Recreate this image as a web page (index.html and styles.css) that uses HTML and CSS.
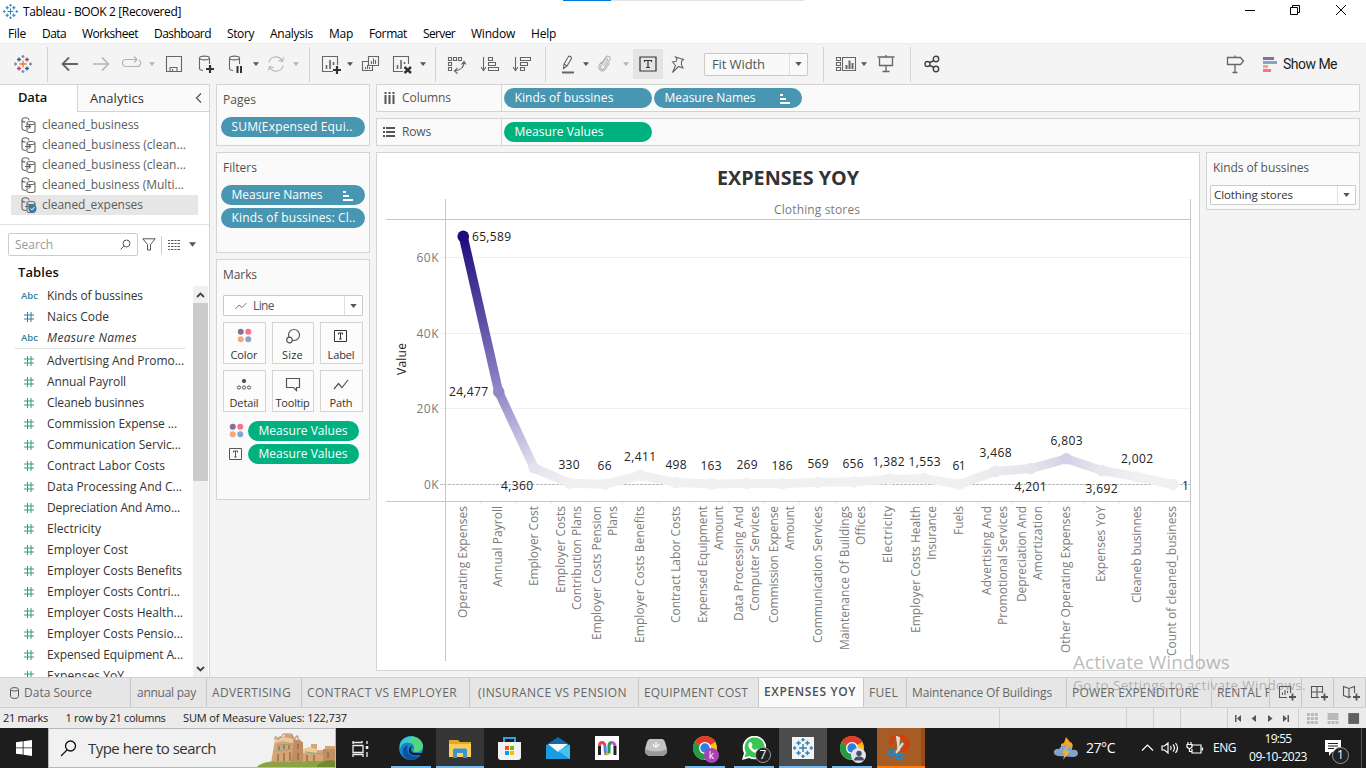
FILE: index.html
```html
<!DOCTYPE html>
<html lang="en">
<head>
<meta charset="utf-8">
<title>Tableau - BOOK 2 [Recovered]</title>
<link rel="stylesheet" href="styles.css">
</head>
<body>
<svg class="defs" width="0" height="0">
  <symbol id="tableau" viewBox="0 0 18 18">
    <path d="M9 5.500v7M5.500 9h7" class="t1"/><path d="M5 2.500v4M3 4.500h4M13 11.500v4M11 13.500h4" class="t2"/><path d="M13 2.500v4M11 4.500h4M5 11.500v4M3 13.500h4" class="t3"/><path d="M9 0v3M7.500 1.500h3M9 15v3M7.500 16.500h3M1.500 7.500v3M0 9h3M16.500 7.500v3M15 9h3" class="t4"/>
  </symbol>
  <symbol id="caret" viewBox="0 0 8 5"><path d="M0 0h8L4 5z" fill="currentColor"/></symbol>
  <symbol id="dots" viewBox="0 0 16 16"><circle cx="4" cy="4" r="3.200" fill="#85709b"/><circle cx="12" cy="4" r="3.200" fill="#fb7185"/><circle cx="4" cy="12" r="3.200" fill="#f4a77c"/><circle cx="12" cy="12" r="3.200" fill="#84a5cd"/></symbol>
  <symbol id="tbox" viewBox="0 0 14 12"><path d="M.5.5h12v11H.5zM4.500 4.500V3h4v1.500M6.500 3v6M5.200 9h2.600" fill="none" stroke="currentColor"/></symbol>
  <symbol id="sort" viewBox="0 0 11 10"><path d="M0 1h3M0 5h6M0 9h10" stroke="#fff" stroke-width="2"/></symbol>
  <symbol id="cyl" viewBox="0 0 16 17"><g fill="none" stroke="#666" stroke-width="1.100"><path d="M8 3.500C8 0 1 0 1 3v8c0 1.500 2 2.500 4 2.500M1 3c0 1.500 2 2 3.500 2"/><path d="M6 6v8c0 2 8 2 8 0V6c0-2-8-2-8 0c0 2 8 2 8 0M4 9.500h5.500M7.500 7.500l2 2-2 2"/></g></symbol>
  <symbol id="chrome" viewBox="0 0 24 24"><circle cx="12" cy="12" r="12" fill="#fbc116"/><path d="M12 12L1.600 6A12 12 0 0 1 22.400 6z" fill="#e33b2e"/><path d="M12 12L1.600 6A12 12 0 0 0 11 24l6-9z" fill="#269947"/><circle cx="12" cy="12" r="6" fill="#fff"/><circle cx="12" cy="12" r="4.700" fill="#2f7de1"/></symbol>
</svg>

<header class="titlebar">
  <svg class="appicon blue" width="15" height="15"><use href="#tableau"/></svg>
  <span class="title" data-w="158">Tableau - BOOK 2 [Recovered]</span>
  <div class="loader"><i></i></div>
  <svg class="winctl" width="110" height="14" viewBox="0 0 110 14" fill="none" stroke="#000"><path d="M2 7.500h10"/><path d="M47.500 4.500h7v7h-7zM49.500 4V2.500h7v7H55"/><path d="M93 2l10 10M103 2L93 12"/></svg>
</header>
<nav class="menubar">
  <span data-w="18">File</span><span data-w="24">Data</span><span data-w="56">Worksheet</span><span data-w="57">Dashboard</span><span data-w="27">Story</span><span data-w="43">Analysis</span><span data-w="24">Map</span><span data-w="38">Format</span><span data-w="32">Server</span><span data-w="44">Window</span><span data-w="25">Help</span>
</nav>
<div class="toolbar">
  <svg class="color" width="18" height="18"><use href="#tableau"/></svg>
  <b class="sep"></b>
  <svg class="back" width="20" height="20" viewBox="0 0 20 20"><path d="M18 10H3M9 3.500L2.500 10 9 16.500" stroke-width="1.800"/></svg>
  <svg class="dim" width="20" height="20" viewBox="0 0 20 20"><path d="M2 10h15M11 3.500l6.500 6.500-6.500 6.500" stroke-width="1.600"/></svg>
  <svg class="dim" width="20" height="20" viewBox="0 0 20 20"><path d="M9 5.500H4a3.500 3.500 0 0 0 0 7h11a3.500 3.500 0 0 0 2-6.500M7 5.500h8M12 2.500l3 3-3 3"/></svg>
  <svg class="caret dim" width="6" height="4"><use href="#caret"/></svg>
  <svg width="20" height="20" viewBox="0 0 20 20"><path d="M2.500 2.500h15v15h-15zM6 17v-3.500h7V17M8.500 17v-2"/></svg>
  <svg width="20" height="20" viewBox="0 0 20 20"><path d="M7 16.500c-2 0-3.500-1-3.500-2V4c0-2.500 10-2.500 10 0v6M3.500 4c0 2.500 10 2.500 10 0"/><path d="M14 11v8M10 15h8" stroke="#333" stroke-width="2.200"/></svg>
  <svg width="20" height="20" viewBox="0 0 20 20"><path d="M7 16.500c-2 0-3.500-1-3.500-2V4c0-2.500 10-2.500 10 0v6M3.500 4c0 2.500 10 2.500 10 0"/><path d="M11.500 12v7M15 12v7" stroke="#333" stroke-width="2"/></svg>
  <svg class="caret" width="6" height="4"><use href="#caret"/></svg>
  <svg class="dim" width="20" height="20" viewBox="0 0 20 20"><path d="M3 8.500a7 7 0 0 1 13-2M17 11.500a7 7 0 0 1-13 2M17.500 3.500l-1 4-4-1M2.500 16.500l1-4 4 1"/></svg>
  <svg class="caret dim" width="6" height="4"><use href="#caret"/></svg>
  <b class="sep"></b>
  <svg width="20" height="20" viewBox="0 0 20 20"><path d="M12 17.500H1.500v-15h15V11"/><path d="M5.500 15v-4M9 15V6M12.500 11V8" stroke-width="1.600"/><path d="M16 12v8M12 16h8" stroke="#333" stroke-width="2.200"/></svg>
  <svg class="caret" width="6" height="4"><use href="#caret"/></svg>
  <svg width="20" height="20" viewBox="0 0 20 20"><path d="M7.500 2.500h10v9h-10zM7 7.500H1.500v9h10V12M10.500 10V7M12.500 10V4.500M14.500 10V6M4.500 15v-2M6.500 15v-4M8.500 15v-2"/></svg>
  <svg width="20" height="20" viewBox="0 0 20 20"><path d="M11 17.500H1.500v-15h15V10"/><path d="M5.500 15v-4M9 15V6M12.500 10V8" stroke-width="1.600"/><path d="M12.500 13l6.500 6M19 13l-6.500 6" stroke="#333" stroke-width="2.400"/></svg>
  <svg class="caret" width="6" height="4"><use href="#caret"/></svg>
  <b class="sep"></b>
  <svg width="20" height="20" viewBox="0 0 20 20"><path d="M1.500 3.500h3v3h-3zM6.500 3.500h3v3h-3zM11.500 3.500h3v3h-3zM1.500 8.500h3v3h-3zM1.500 13.500h3v3h-3zM17 8c0 5-3 8-9 9M14.500 10.500L17 7.500l2 3M10.500 14l-3 3 3 2.500"/></svg>
  <svg width="20" height="20" viewBox="0 0 20 20"><path d="M3.500 3v13M1 13l2.500 3.500L6 13M8.500 3.500h4v3h-4zM8.500 8.500h7v3h-7zM8.500 13.500h10v3h-10z"/></svg>
  <svg width="20" height="20" viewBox="0 0 20 20"><path d="M3.500 3v13M1 13l2.500 3.500L6 13M8.500 3.500h10v3h-10zM8.500 8.500h7v3h-7zM8.500 13.500h4v3h-4z"/></svg>
  <b class="sep"></b>
  <svg width="20" height="20" viewBox="0 0 20 20"><path d="M6 10L10.500 2.500c1-1 3.500.5 3 2L9 12l-3.500 2.500zM6 10l3 2"/><path d="M4 18.500h12" stroke-width="2"/></svg>
  <svg class="caret" width="6" height="4"><use href="#caret"/></svg>
  <svg class="dim" width="20" height="20" viewBox="0 0 20 20"><path d="M6 10l5-7c2-2 5 0 4 2.500l-6 9c-1.500 2-4.500 0-3.500-2l5-7.500c1-1 2.500 0 2 1l-4 6M6 8L4.500 11c-2 4 2 8 5.500 4.500L14.500 9"/></svg>
  <svg class="caret dim" width="6" height="4"><use href="#caret"/></svg>
  <span class="toggled"><svg width="18" height="16" viewBox="0 0 18 16"><path d="M1 1h16v14H1zM5.500 6V4.500h7V6M9 4.500v7M7 11.500h4" stroke="#333" stroke-width="1.200"/></svg></span>
  <svg width="20" height="20" viewBox="0 0 20 20"><path d="M7.500 3l8 2.500-2 1.500 0 4 1.500 3-4.500-1.500-6 6 3-7-3-3.500 3.500-.5L9 5z"/></svg>
  <span class="select fit"><span data-w="53">Fit Width</span><i><svg class="caret" width="7" height="4"><use href="#caret"/></svg></i></span>
  <b class="sep"></b>
  <svg width="35" height="20" viewBox="0 0 35 20"><path d="M12.500 3.500h4v3h-4zM12.500 8.500h4v3h-4zM12.500 13.500h4v3h-4zM18.500 3.500h13v13h-13z"/><path d="M22.500 15v-4M25.500 15V6.500M28.500 15V9" stroke-width="2"/></svg>
  <svg class="caret" width="6" height="4"><use href="#caret"/></svg>
  <svg width="20" height="20" viewBox="0 0 20 20"><path d="M1.500 3h17M10 1v2M3.500 4v7.500h13V4M10 12v5.500M6.500 17.500h7" stroke-width="1.300"/></svg>
  <b class="sep"></b>
  <svg width="20" height="20" viewBox="0 0 20 20" class="dark"><circle cx="5.500" cy="10" r="2.500"/><circle cx="14" cy="5" r="2.700"/><circle cx="14" cy="15" r="2.700"/><path d="M8 8.500l4-2M8 11.500l4 2"/></svg>
  <span></span>
  <svg width="20" height="20" viewBox="0 0 20 20"><path d="M2.500 3.500h13l3 3.500-3 3.500h-13zM10 1.500v2M10 10.500v8M7.500 18.500h5" stroke-width="1.300"/></svg>
  <span class="showme"><svg width="14" height="15" viewBox="0 0 14 15"><path d="M0 1.500h11" stroke="#85709b"/><path d="M0 5.500h14" stroke="#84a5cd"/><path d="M0 9.500h5" stroke="#f4a77c"/><path d="M0 13.500h8" stroke="#fb7185"/></svg><span data-w="54">Show Me</span></span>
</div>

<main class="work">
  <aside class="side">
    <div class="sidetabs"><b data-w="29">Data</b><div><span data-w="54">Analytics</span><svg width="7" height="10" viewBox="0 0 7 10"><path d="M6 .5L1.500 5 6 9.500" fill="none" stroke="#555" stroke-width="1.300"/></svg></div></div>
    <div class="sources" id="sources"></div>
    <div class="searchrow">
      <div class="search"><span data-w="38">Search</span><svg width="11" height="11" viewBox="0 0 11 11" fill="none" stroke="#555"><circle cx="6.500" cy="4.500" r="3.500"/><path d="M4 7L.5 10.500"/></svg></div>
      <svg width="14" height="13" viewBox="0 0 14 13" fill="none" stroke="#555"><path d="M.8.800h12.400L8.500 6.500V12h-3V6.500z"/></svg>
      <b></b>
      <svg width="13" height="10" viewBox="0 0 13 10"><path d="M0 .5h13M0 3.500h13M0 6.500h13M0 9.500h13" stroke="#555" stroke-dasharray="2 1 2.500 1"/></svg>
      <svg width="7" height="5"><use href="#caret"/></svg>
    </div>
    <h3 class="tables"><span data-w="41">Tables</span></h3>
    <div class="fieldpane">
      <div class="fields" id="fields"></div>
      <div class="scroll"><svg width="9" height="6" viewBox="0 0 9 6"><path d="M1 5l3.500-3.500L8 5" fill="none" stroke="#444" stroke-width="1.800"/></svg><i></i><svg width="9" height="6" viewBox="0 0 9 6"><path d="M1 1l3.500 3.500L8 1" fill="none" stroke="#444" stroke-width="1.800"/></svg></div>
    </div>
  </aside>

  <section class="cards">
    <div class="card pages"><h4><span data-w="33">Pages</span></h4><div class="pill blue"><span data-w="121">SUM(Expensed Equi..</span></div></div>
    <div class="card filters"><h4><span data-w="34">Filters</span></h4><div class="pill blue"><span data-w="91">Measure Names</span><svg width="11" height="10"><use href="#sort"/></svg></div><div class="pill blue"><span data-w="124">Kinds of bussines: Cl..</span></div></div>
    <div class="card marks"><h4><span data-w="34">Marks</span></h4>
      <div class="select mark"><svg width="12" height="8" viewBox="0 0 12 8"><path d="M.5 7L4 3l3 2.500L11.500 1" fill="none" stroke="#777"/></svg><span data-w="21">Line</span><i><svg class="caret" width="7" height="4"><use href="#caret"/></svg></i></div>
      <div class="buttons">
        <div><svg width="15" height="16" viewBox="0 0 15 16"><use href="#dots" width="15" height="15"/></svg><span data-w="27">Color</span></div>
        <div><svg width="16" height="16" viewBox="0 0 16 16" fill="none" stroke="#555" stroke-width="1.200"><circle cx="9" cy="7" r="5.500"/><circle cx="4.500" cy="12" r="2.800" fill="#fafafa"/></svg><span data-w="21">Size</span></div>
        <div><svg width="14" height="16" viewBox="0 -2 14 16"><use href="#tbox" width="14" height="12"/></svg><span data-w="27">Label</span></div>
        <div><svg width="16" height="16" viewBox="0 0 16 16" fill="none" stroke="#555"><circle cx="8" cy="5" r="1.700" fill="#555"/><circle cx="3" cy="11.500" r="1.600"/><circle cx="8" cy="11.500" r="1.600"/><circle cx="13" cy="11.500" r="1.600"/></svg><span data-w="29">Detail</span></div>
        <div><svg width="16" height="16" viewBox="0 0 16 16" fill="none" stroke="#555" stroke-width="1.200"><path d="M1.500 2.500h13v9h-3v3l-3-3h-7z"/></svg><span data-w="34">Tooltip</span></div>
        <div><svg width="16" height="16" viewBox="0 0 16 16" fill="none" stroke="#555" stroke-width="1.200"><path d="M1 13l4.500-5.500 3.500 4L15 4"/></svg><span data-w="23">Path</span></div>
      </div>
      <div class="enc"><svg width="16" height="16" viewBox="0 0 16 16"><use href="#dots" width="15" height="15"/></svg><div class="pill green"><span data-w="89">Measure Values</span></div></div>
      <div class="enc"><svg width="14" height="12" viewBox="1 0 14 12"><use href="#tbox" width="14" height="12"/></svg><div class="pill green"><span data-w="89">Measure Values</span></div></div>
    </div>
  </section>

  <section class="stage">
    <div class="shelf"><div><svg width="13" height="12" viewBox="0 0 13 12"><path d="M2.500 0v12M6.500 0v12M10.500 0v12" stroke="#555" stroke-width="2" stroke-dasharray="2 1 9"/></svg><span data-w="49">Columns</span></div><div class="pill blue"><span data-w="99">Kinds of bussines</span></div><div class="pill blue"><span data-w="91">Measure Names</span><svg width="11" height="10"><use href="#sort"/></svg></div></div>
    <div class="shelf"><div><svg width="13" height="12" viewBox="0 0 13 12"><path d="M0 2h12M0 6h12M0 10h12" stroke="#555" stroke-width="2" stroke-dasharray="2 1 9"/></svg><span data-w="29">Rows</span></div><div class="pill green"><span data-w="89">Measure Values</span></div></div>
    <div class="viewrow">
      <div class="view"><svg id="chart" width="822" height="517" viewBox="377 153 822 517"></svg></div>
      <div class="qf"><span data-w="96">Kinds of bussines</span><div class="select"><span data-w="79">Clothing stores</span><i><svg class="caret" width="7" height="4"><use href="#caret"/></svg></i></div></div>
    </div>
  </section>
</main>

<div class="sheets">
  <div class="s0"><svg width="9" height="12" viewBox="0 0 9 12" fill="none" stroke="#555"><path d="M.5 2.500v7c0 2.500 8 2.500 8 0v-7c0-2.500-8-2.500-8 0c0 2 8 2 8 0"/></svg><span data-w="68">Data Source</span></div>
  <div><span data-w="59">annual pay</span></div><div><span data-w="79">ADVERTISING</span></div><div><span data-w="150">CONTRACT VS EMPLOYER</span></div><div class="s4"><span data-w="149">(INSURANCE VS PENSION</span></div><div><span data-w="104">EQUIPMENT COST</span></div><div class="active"><span data-w="92">EXPENSES YOY</span></div><div><span data-w="29">FUEL</span></div><div><span data-w="140">Maintenance Of Buildings</span></div><div><span data-w="127">POWER EXPENDITURE</span></div><div><span data-w="54">RENTAL F</span></div>
  <div class="new"><svg width="18" height="16" viewBox="0 0 18 16"><path d="M9 12.500H1.500v-11h11V8M4.500 10V7.500M7 10V5M9.500 8V6"/><path d="M11 12h7M14.500 8.500v7" stroke-width="1.800"/></svg></div>
  <div class="new"><svg width="18" height="16" viewBox="0 0 18 16"><path d="M9 12.500H1.500v-11h11V8M7 1.500v11M1.500 7h11"/><path d="M11 12h7M14.500 8.500v7" stroke-width="1.800"/></svg></div>
  <div class="new"><svg width="18" height="16" viewBox="0 0 18 16"><path d="M7 12.500l-5.500-2v-9L7 3.500l5.500-2V8M7 3.500v9l2-1"/><path d="M11 12h7M14.500 8.500v7" stroke-width="1.800"/></svg></div>
</div>
<div class="status">
  <span data-w="45">21 marks</span><span data-w="100">1 row by 21 columns</span><span data-w="164">SUM of Measure Values: 122,737</span>
  <div class="cells"><i class="w1"></i><i></i><i></i><i class="w2"></i>
    <svg width="70" height="20" viewBox="1 0 70 20" fill="#555"><path d="M8 7h1.500v7H8zM14 7v7l-4-3.500zM29 7v7l-4.500-3.500zM41 7v7l4.500-3.500zM56 7v7l4-3.500zM60.500 7H62v7h-1.500z"/></svg>
    <svg width="68" height="20" viewBox="0 0 68 20" fill="#b9b9b9"><path d="M8 5h3v3H8zM12 5h3v3h-3zM16 5h3v3h-3zM8 9h3v3H8zM12 9h3v3h-3zM16 9h3v3h-3zM8 13h3v3H8zM12 13h3v3h-3zM16 13h3v3h-3zM29 5h11v7H29zM29 13h3v3h-3zM33 13h3v3h-3zM37 13h3v3h-3z"/><path d="M50 5h11v11H50z" fill="#606060"/></svg>
  </div>
</div>

<footer class="taskbar">
  <div class="start"><svg width="16" height="16" viewBox="0 0 16 16" fill="#fff"><path d="M0 2.300l6.700-1v6.200H0zM7.500 1.200L16 0v7.500H7.500zM0 8.300h6.700v6.300L0 13.700zM7.500 8.300H16V16l-8.500-1.200z"/></svg></div>
  <div class="tsearch"><svg width="17" height="17" viewBox="0 0 17 17" fill="none" stroke="#111" stroke-width="1.300"><circle cx="10.500" cy="6" r="5"/><path d="M7 10l-6 6"/></svg><span data-w="128">Type here to search</span>
    <svg class="castle" width="78" height="38" viewBox="0 0 78 38"><path d="M14 34l4-23 8-3 3-3 7 1 1 4 8 3 1 7h8v-5h6v6h8v-4h10v21z" fill="#d5a576"/><path d="M46 13v22H34l3-25zM66 20h12v15H66z" fill="#c08e60"/><path d="M18 11l8-3 10 2v4l-10-2-8 2zM46 20l6-2 8 2v4H46z" fill="#edc99c"/><path d="M20 16l16-1M19 22l17-2M48 23l18 2" stroke="#8fa88c"/><path d="M22 17v4M27 16v4M32 16v4M21 25v7M27 24v8M33 23v9M41 15v5M41 24v7M50 26v7M57 26v7M71 23v6" stroke="#996a42" stroke-width="1.400"/><path d="M18 11V8h2v2h2V8h2v1l2-4h9l1 4h3v-2h2v4h2v2" fill="none" stroke="#b5885c"/><path d="M0 38c8-9 28-4 42-5s25-2 36 1v4z" fill="#8aa445"/><path d="M60 37c4-5 12-7 18-5v6H60z" fill="#6f8a2c"/></svg>
  </div>
  <div class="apps">
    <div><svg width="17" height="17" viewBox="0 0 17 17" fill="none" stroke="#eee" stroke-width="1.300"><path d="M1 4V1M1 2.500h9V1M1 5.500h10v7H1zM1 17v-2.500h10V17M15 1v3M15 12v5"/><path d="M15 6v3" stroke-width="2.600"/></svg></div>
    <div class="run"><svg width="24" height="24" viewBox="0 0 24 24"><circle cx="12" cy="12" r="12" fill="#1685c9"/><path d="M1 8C4-1 18-3 23 7c3 7-4 11-9 8 2-2 2-7-4-8S2 9 1 14z" fill="#39c7d3"/><path d="M13 1c8 0 13 7 10 12-2 4-7 3-9 2 3-4 1-10-5-10z" fill="#54d67a"/><path d="M9 9c-3 8 3 13 12 11-6 7-15 4-17-2-1-5 1-8 5-9z" fill="#0d4fa2"/><path d="M14 10c-3 1-3 6 1 7h8l1 3-4-1c-6 1-11-1-10-5 0-3 2-4 4-4z" fill="#1d1d1d"/></svg></div>
    <div class="run on wide"><svg width="22" height="19" viewBox="0 0 22 19"><path d="M0 1h9l2 2h11v15H0z" fill="#e9a820"/><path d="M0 5h22v13H0z" fill="#fbcf58"/><path d="M4 19v-8q0-1.500 1.500-1.500h11Q18 9.500 18 11v8h-4v-5H8v5z" fill="#3d92d6"/></svg></div>
    <div><svg width="23" height="23" viewBox="0 0 23 23"><path d="M6 6V1h11v5" fill="none" stroke="#2aa7e1" stroke-width="2"/><path d="M0 5h23v15q0 3-3 3H3q-3 0-3-3z" fill="#f2f2f2"/><path d="M7 9h4v4H7z" fill="#f25022"/><path d="M12 9h4v4h-4z" fill="#7fba00"/><path d="M7 14h4v4H7z" fill="#00a4ef"/><path d="M12 14h4v4h-4z" fill="#ffb900"/></svg></div>
    <div><svg width="24" height="22" viewBox="0 0 24 22"><path d="M0 8l12-8 12 8z" fill="#1466ae"/><path d="M0 8h24v14H0z" fill="#1b9be2"/><path d="M2 7h20L12 15z" fill="#f4f6f8"/><path d="M24 8v14L12 14z" fill="#42c5ed"/></svg></div>
    <div><svg width="24" height="24" viewBox="0 0 24 24"><path d="M0 0h24v24H0z" fill="#fff"/><g fill="none" stroke-width="3"><path d="M4.500 19v-9" stroke="#222"/><path d="M4.500 10q0-3.500 2.500-3.500T10 10" stroke="#ee4256"/><path d="M10 10q0 5 1 9" stroke="#4b87e8"/><path d="M11 18q2 0 3.500-2" stroke="#f2b320"/><path d="M14 17v-7q0-3 2.500-3.500" stroke="#1e9a56"/><path d="M16 6.500q4 0 4 4" stroke="#d84bde"/><path d="M20 10v9" stroke="#222"/></g></svg></div>
    <div><svg width="24" height="20" viewBox="0 0 24 20"><path d="M6 1h12q2 0 3 3l2 7q1 5-4 7H5q-5-2-4-7l2-7q1-3 3-3z" fill="#c4c4c4"/><path d="M1 11q11 5 22 0 1 5-4 7H5q-5-2-4-7z" fill="#999"/><path d="M12 4v6M9.500 6v2l2.500 1M14.500 6v1.500L12 8.500" stroke="#fff" fill="none"/></svg></div>
    <div class="run"><svg width="24" height="24"><use href="#chrome"/></svg><em class="k">k</em></div>
    <div class="run"><svg width="24" height="24" viewBox="0 0 24 24"><path d="M0 24l2-7A11.800 11.800 0 1 1 7 22z" fill="#fff"/><path d="M2.500 21.500l1.500-5A10 10 0 1 1 7.500 20z" fill="#39c655"/><path d="M8 6c-5 4 3 12 8 11 3-1 2-3 1-3.500l-2-1-1.500 1.500c-2-.5-3.500-2-4-3.500L10.500 9 9.500 6.500z" fill="#fff"/></svg><em class="seven">7</em></div>
    <div class="run wide sel"><span class="tile"><svg class="blue" width="20" height="20"><use href="#tableau"/></svg></span></div>
    <div class="run"><svg width="24" height="24"><use href="#chrome"/></svg><em class="user"><svg width="16" height="16" viewBox="0 0 16 16"><circle cx="8" cy="5.500" r="2.700" fill="#40506a"/><path d="M3 12.500q0-4 5-4t5 4z" fill="#40506a"/></svg></em></div>
    <div class="run wide snip"><svg width="24" height="26" viewBox="0 0 24 26"><path d="M5 9C2 3 10-1 17 3c6 4 4 12-3 12" fill="none" stroke="#d83b0c" stroke-width="4"/><path d="M10 1l2 15M12 2l-1 14M16 8l-7 10" stroke="#d7dbe0" stroke-width="2.200"/><g fill="none" stroke="#1b86d0" stroke-width="2.400"><circle cx="4.500" cy="18" r="2.600"/><circle cx="12.500" cy="21.500" r="2.600"/></g></svg></div>
  </div>
  <div class="tray">
    <svg width="26" height="26" viewBox="0 0 26 26"><path d="M9 14Q6 8 11 8l2-6 4 5q4 1 2 7z" fill="#f8a52e"/><path d="M5 21q-5-1-4-5 2-3 5-2 4-6 10-3 3 1 3 4 6-1 6 4-1 3-5 3z" fill="#7fa4ce"/><path d="M14 11l-5 7h3l-2 7 7-9h-4l3-5z" fill="#fdb02b"/></svg>
    <span class="temp" data-w="29">27°C</span>
    <svg class="tico" width="66" height="16" viewBox="0 0 66 16" fill="none" stroke="#fff" stroke-width="1.200"><path d="M2 10.500L7.500 5 13 10.500"/><path d="M22 6h2.500L28 3v10l-3.500-3H22zM30.500 6q1.500 2 0 4M33 4.500q3 3.500 0 7M35.500 3q4 5 0 10"/><path d="M51 5h10v8H52V9M48 2v3M51 2v3M47 4.500h5v2.500q-2.500 3-5 0zM49.500 9v2.500H52M62.500 7.500v3"/></svg>
    <span class="eng" data-w="23">ENG</span>
    <div class="clock"><span data-w="27">19:55</span><span data-w="58">09-10-2023</span></div>
    <div class="notif"><svg width="16" height="16" viewBox="0 0 16 16"><path d="M0 0h16v12H7l-3 4v-4H0z" fill="#fff"/><path d="M3 3.500h10M3 6h10M3 8.500h6" stroke="#222"/></svg><em>1</em></div>
  </div>
</footer>
<div class="activate"><span data-w="157">Activate Windows</span><span data-w="233">Go to Settings to activate Windows.</span></div>
<script src="app.js"></script>
</body>
</html>
```

FILE: styles.css
```css
* { box-sizing: border-box; }
body { margin: 0; width: 1366px; height: 768px; overflow: hidden; display: flex; flex-direction: column; background: #f4f4f4; font: 12px/16px "Open Sans", "Noto Sans", sans-serif; color: #333; position: relative; }
svg { display: block; flex: none; }
.defs { position: absolute; }
[data-w] { display: inline-block; white-space: nowrap; flex: none; }
i, em { font-style: normal; }

.t1 { stroke: var(--logo, #eb7635); } .t2 { stroke: var(--logo, #2a5c93); } .t3 { stroke: var(--logo, #c63a48); } .t4 { stroke: var(--logo, #6f8fb8); }
.t1, .t2, .t3, .t4 { fill: none; stroke-width: 1.300; }
svg.blue { --logo: #2f83b5; }

.titlebar { height: 22px; flex: none; background: #fff; display: flex; align-items: center; padding: 1px 13px 0 3px; position: relative; color: #000; }
.titlebar .title { margin-left: 5px; }
.loader { position: absolute; left: 563px; top: 0; width: 241px; height: 1px; background: #e3e3e3; }
.loader i { display: block; width: 48px; height: 1px; background: #0078d7; }
.winctl { margin-left: auto; margin-top: -3px; }
.menubar { height: 21px; flex: none; background: #fff; display: flex; gap: 16px; padding: 4px 8px 0; color: #000; }

.toolbar { height: 41px; flex: none; display: grid; align-items: center; justify-items: center; border-top: 1px solid #ededed;
  grid-template-columns: 46px 2px 38px 30px 32px 8px 36px 28px 32px 8px 32px 8px 18px 26px 12px 30px 32px 9px 16px 28px 38px 26px 20px 26px 9px 30px 11px 34px 25px 132px 2px 35px 9px 35px 14px 30px 274px 28px 117px; }
.toolbar > svg { fill: none; stroke: #666; stroke-width: 1.100; }
.toolbar > svg.back { margin-left: 6px; }
.toolbar > svg.dim { stroke: #b4b4b4; color: #b4b4b4; }
.toolbar > svg.dark { stroke: #444; stroke-width: 1.400; }
.toolbar > svg.caret, svg.caret { stroke: none; color: #555; }
.toolbar > svg.caret.dim { color: #b4b4b4; }
.sep { width: 1px; height: 35px; background: #d2d2d2; }
.toggled { width: 30px; height: 30px; background: #e4e4e4; display: grid; place-items: center; }
.toggled svg { fill: none; }
.select { border: 1px solid #cacaca; border-radius: 1px; background: #fff; display: flex; align-items: center; }
.select i { margin-left: auto; width: 18px; align-self: stretch; border-left: 1px solid #e0e0e0; display: grid; place-items: center; }
.fit { width: 104px; height: 23px; padding-left: 7px; background: #f9f9f9; font-size: 13px; color: #555; }
.showme { justify-self: start; padding-left: 14px; display: flex; align-items: center; gap: 6px; font-size: 14px; font-family: Roboto, "Open Sans", sans-serif; color: #222; }
.showme svg { stroke-width: 3; }

.work { height: 593px; flex: none; display: flex; }
.side { width: 210px; flex: none; background: #fff; border: 1px solid #d4d4d4; border-left: 0; border-bottom: 0; display: flex; flex-direction: column; overflow: hidden; margin-right: 6px; }
.sidetabs { display: flex; height: 27px; flex: none; font-size: 13px; line-height: 25px; color: #333; }
.sidetabs b { margin-left: 18px; margin-right: 30px; font-weight: 600; color: #111; }
.sidetabs div { flex: 1; border-left: 1px solid #d4d4d4; border-bottom: 1px solid #d4d4d4; background: #fafafa; display: flex; align-items: center; justify-content: space-between; padding: 0 7px 0 12px; }
.sidetabs div span { line-height: 24px; }
.sources { padding: 3px 11px 9px; border-bottom: 1px solid #e0e0e0; }
.sources div { height: 20px; display: flex; align-items: center; gap: 5px; padding-left: 10px; color: #5c5c5c; position: relative; }
.sources .sel { background: #e6e6e6; }
.sources .check { position: absolute; left: 17px; top: 9px; }
.searchrow { display: flex; align-items: center; padding: 8px 0 0 8px; color: #555; height: 31px; flex: none; }
.search { width: 130px; height: 23px; border: 1px solid #ccc; border-radius: 2px; display: flex; align-items: center; justify-content: space-between; padding: 0 6px; color: #999; margin-right: 4px; }
.searchrow b { width: 1px; height: 18px; background: #ccc; margin: 0 6px 0 5px; }
.searchrow svg:last-child { margin-left: 8px; }
.tables { margin: 8px 0 5px 18px; font-size: 13px; line-height: 17px; font-weight: 600; color: #111; }
.fieldpane { flex: 1; display: flex; overflow: hidden; }
.fields { flex: 1; height: 392px; overflow: hidden; margin-top: -1px; }
.fields div { height: 21px; display: flex; align-items: center; }
.fields svg { margin: 0 13px 0 24px; width: 10px; }
.fields b { font-size: 9.500px; font-weight: 600; color: #2f7fa0; width: 26px; margin-left: 21px; }
.fields .it span { font-style: italic; }
.fields hr { margin: 0 8px 1px 15px; border: 0; height: 1px; background: #ddd; }
.scroll { width: 15px; margin-right: 1px; background: #f0f0f0; display: flex; flex-direction: column; align-items: center; padding: 6px 0 5px; }
.scroll i { width: 15px; height: 178px; background: #cbcbcb; margin: 5px 0 auto; }

.cards { width: 154px; flex: none; margin-right: 6px; display: flex; flex-direction: column; gap: 6px; }
.card { border: 1px solid #d4d4d4; background: #fafafa; padding: 7px 4px 0; }
.card h4 { margin: 0 0 9px 2px; font-weight: 400; font-size: 12px; line-height: 16px; color: #505050; }
.pages { height: 62px; } .filters { height: 101px; } .marks { height: 241px; }
.pill { height: 20px; border-radius: 10px; color: #fff; font-size: 12px; font-weight: 500; display: flex; align-items: center; justify-content: space-between; padding: 0 11px 1px 10.500px; }
.pill.blue { background: #4996b2; } .pill.green { background: #00b180; }
.pill svg { margin-top: 2px; }
.filters .pill { margin-bottom: 3px; }
.mark { width: 140px; height: 21px; margin: 12px 0 6px 2px; padding-left: 11px; gap: 6px; color: #555; }
.buttons { display: grid; grid-template-columns: 43px 42px 43px; gap: 6px; margin-left: 2px; }
.buttons div { height: 42px; border: 1px solid #d4d4d4; background: #fcfcfc; display: flex; flex-direction: column; align-items: center; padding: 5px 1px 0 0; gap: 3px; font-size: 11px; color: #333; }
.enc { display: flex; align-items: center; margin: 9px 0 0 8px; height: 20px; color: #555; }
.enc + .enc { margin-top: 3px; }
.enc svg { width: 16px; margin-right: 3px; }
.enc .pill { width: 111px; }

.stage { width: 984px; display: flex; flex-direction: column; gap: 6px; }
.shelf { height: 28px; flex: none; border: 1px solid #d4d4d4; background: #fafafa; display: flex; align-items: center; gap: 2px; }
.shelf > div:first-child { width: 125px; align-self: stretch; border-right: 1px solid #d4d4d4; display: flex; align-items: center; gap: 6px; padding-left: 6px; color: #555; }
.shelf .pill { width: 148px; }
.viewrow { display: flex; gap: 6px; align-items: flex-start; }
.view { width: 824px; height: 519px; border: 1px solid #d4d4d4; background: #fff; }
.qf { width: 154px; height: 58px; border: 1px solid #d4d4d4; background: #fafafa; padding: 7px 3px; color: #555; }
.qf > span { margin-left: 3px; }
.qf .select { height: 20px; margin-top: 9px; padding-left: 3px; font-size: 11.500px; color: #333; }

.ct { font: 12px "Open Sans", sans-serif; fill: #222; }
.ax { fill: #7c7c7c; }
.axis { stroke: #c6c6c6; }
.grid { stroke: #f0f0f0; }

.sheets { height: 31px; flex: none; display: grid; grid-template-columns: 131px 76px 95px 168px 169px 120px 105px 43px 160px 145px 58px 32px 32px 32px; border-top: 1px solid #d0d0d0; border-bottom: 1px solid #d0d0d0; background: #e6e6e6; color: #666; }
.sheets div { border-right: 1px solid #c8c8c8; padding-left: 5px; display: flex; align-items: center; overflow: hidden; }
.sheets div:nth-child(2) { padding-left: 6px; }
.sheets .s0 { padding-left: 10px; gap: 5px; }
.sheets .s4 { padding-left: 8px; }
.sheets .active { background: #fafafa; font-weight: 600; color: #505050; padding-bottom: 2px; }
.sheets .new { padding: 0 0 0 8px; }
.new svg { fill: none; stroke: #555; stroke-width: 1.100; }
.status { height: 20px; flex: none; background: #ebebeb; display: flex; align-items: center; gap: 17.500px; padding-left: 3px; font-size: 11px; color: #222; }
.cells { margin-left: auto; display: flex; align-self: stretch; }
.cells i { width: 27px; border-left: 1px solid #cfcfcf; }
.cells .w1 { width: 127px; }
.cells .w2 { width: 47px; }
.cells svg { border-left: 1px solid #cfcfcf; }
.cells svg:first-of-type { width: 71px; }

.taskbar { height: 40px; flex: none; background: #1d1d1d; display: flex; color: #fff; }
.start { width: 48px; display: grid; place-items: center; }
.tsearch { width: 288px; background: #f1f1f1; border: 1px solid #b8b8b8; display: flex; align-items: center; padding-left: 11px; gap: 11px; font-size: 15px; color: #333; }
.castle { margin-left: auto; }
.apps { display: flex; gap: 1px; padding-left: 2px; }
.apps > div { width: 48px; height: 40px; display: grid; place-items: center; position: relative; }
.apps > div:first-child { padding-right: 4px; }
.run::after { content: ""; position: absolute; left: 4px; right: 4px; bottom: 0; height: 2px; background: #76b9ed; }
.apps > .wide::after { left: 0; right: 0; }
.on { background: #363636; } .sel.wide { background: #4c4c4c; }
.snip { background: #a65c25; border-right: 4px solid #984e1c; }
.apps > .snip::after { background: #ff7b0f; right: -4px; }
.tile { width: 22px; height: 22px; background: #f4f4f4; display: grid; place-items: center; }
.apps em { position: absolute; left: 23px; top: 20px; width: 15px; height: 15px; border-radius: 50%; text-align: center; font-size: 10px; line-height: 14px; }
.apps .k { background: #a544b8; }
.apps .seven { left: 25px; top: 19px; width: 16px; height: 16px; background: #222; border: 1px solid #999; line-height: 14px; font-size: 12px; }
.apps .user { background: #dfe3ea; }
.tray { margin-left: auto; display: flex; align-items: center; width: 313px; }
.temp { margin-left: 7px; font-size: 14px; }
.tico { margin: 0 7px 0 25px; }
.eng { margin-right: 13px; }
.clock { width: 58px; display: flex; flex-direction: column; align-items: center; line-height: 18px; margin-top: -1px; }
.notif { margin-left: 18px; position: relative; }
.notif em { position: absolute; left: 7px; top: 7px; width: 17px; height: 17px; border: 1px solid #999; border-radius: 50%; background: #222; text-align: center; line-height: 14px; font-size: 12px; }
.tray::after { content: ""; width: 1px; height: 40px; background: #555; margin-left: auto; margin-right: 4px; }
.activate { position: absolute; left: 1073px; top: 649px; color: rgba(130,130,130,.55); display: flex; flex-direction: column; align-items: flex-start; font-size: 19px; line-height: 26px; }
.activate span + span { font-size: 13.500px; line-height: 20px; }
```

FILE: app.js
```js
const sources = [["cleaned_business", 97], ["cleaned_business (clean...", 144], ["cleaned_business (clean...", 144], ["cleaned_business (Multi...", 142], ["cleaned_expenses", 101]];
const check = `<svg class="check" width="9" height="9" viewBox="0 0 9 9"><circle cx="4.500" cy="4.500" r="4" fill="#2f7fa8"/><path d="M2.500 4.500L4 6l2.500-3" fill="none" stroke="#fff"/></svg>`;
document.getElementById("sources").innerHTML = sources.map(([t, w], i) =>
  `<div class="${i === 4 ? "sel" : ""}"><svg width="16" height="17"><use href="#cyl"/></svg><span data-w="${w}">${t}</span>${i === 4 ? check : ""}</div>`).join("");

const fields = [["Kinds of bussines", 96, "abc"], ["Naics Code", 62, "dim"], ["Measure Names", 90, "it"], null,
  ["Advertising And Promo...", 137], ["Annual Payroll", 79], ["Cleaneb businnes", 97], ["Commission Expense ...", 130],
  ["Communication Servic...", 134], ["Contract Labor Costs", 118], ["Data Processing And C...", 135], ["Depreciation And Amo...", 133],
  ["Electricity", 54], ["Employer Cost", 81], ["Employer Costs Benefits", 135], ["Employer Costs Contri...", 133],
  ["Employer Costs Health...", 136], ["Employer Costs Pensio...", 136], ["Expensed Equipment A...", 136], ["Expenses YoY", 77]];
document.getElementById("fields").innerHTML = fields.map(f => {
  if (!f) return "<hr>";
  const [t, w, k] = f;
  const icon = k === "abc" || k === "it" ? `<b>Abc</b>`
    : `<svg width="10" height="10" viewBox="0 0 10 10"><path d="M3.500 0v10M7 0v10M0 3h10M0 7h10" stroke="${k ? "#2f7fa0" : "#2f9e78"}"/></svg>`;
  return `<div class="${k || ""}">${icon}<span data-w="${w}">${t}</span></div>`;
}).join("");

// value, label centre x, label centre y, label width, axis caption lines
const data = [
  [65589, 491.5, 236, 39, [["Operating Expenses", 112]]],
  [24477, 468.5, 391.500, 39, [["Annual Payroll", 81]]],
  [4360, 517, 485.500, 32, [["Employer Cost", 80]]],
  [330, 569, 464.500, 21, [["Employer Costs", 87], ["Contribution Plans", 104]]],
  [66, 604.5, 465.500, 14, [["Employer Costs Pension", 134], ["Plans", 30]]],
  [2411, 640, 456.500, 32, [["Employer Costs Benefits", 137]]],
  [498, 676, 464.500, 21, [["Contract Labor Costs", 117]]],
  [163, 711, 465.500, 21, [["Expensed Equipment", 117], ["Amount", 44]]],
  [269, 747, 464.500, 21, [["Data Processing And", 115], ["Computer Services", 105]]],
  [186, 782, 465.500, 21, [["Commission Expense", 117], ["Amount", 44]]],
  [569, 818, 463.500, 21, [["Communication Services", 137]]],
  [656, 853, 463.500, 21, [["Maintenance Of Buildings", 144], ["Offices", 39]]],
  [1382, 888.5, 461, 32, [["Electricity", 57]]],
  [1553, 924.5, 461, 32, [["Employer Costs Health", 127], ["Insurance", 54]]],
  [61, 959, 465.500, 13, [["Fuels", 29]]],
  [3468, 995.5, 452.500, 32, [["Advertising And", 89], ["Promotional Services", 119]]],
  [4201, 1030.5, 486.500, 32, [["Depreciation And", 96], ["Amortization", 74]]],
  [6803, 1066.5, 440.500, 32, [["Other Operating Expenses", 147]]],
  [3692, 1101.5, 488.500, 32, [["Expenses YoY", 76]]],
  [2002, 1137, 458.500, 32, [["Cleaneb businnes", 97]]],
  [1, 1184.5, 485, 5, [["Count of cleaned_business", 150]]]
];
const step = 745 / 21;
const px = i => 445.5 + step * (i + .5);
const py = v => 484.5 - v * 0.003783;
const ramp = [[0, [240, 240, 240]], [2500, [240, 240, 240]], [6803, [214, 209, 232]], [24477, [146, 134, 200]], [65589, [31, 13, 125]]];
const shade = v => {
  let k = 1;
  while (k < ramp.length - 1 && v > ramp[k][0]) k++;
  const [a, ca] = ramp[k - 1], [b, cb] = ramp[k], t = (v - a) / (b - a);
  return `rgb(${ca.map((c, j) => Math.round(c + (cb[j] - c) * t))})`;
};
const fitted = (t, w) => t.length > 1 ? `textLength="${w}"` : "";
let out = "";
[257.5, 333.5, 408.5].forEach((y, i) => {
  out += `<path class="grid" d="M440 ${y}H1190"/><text class="ct ax" x="416.500" y="${y + 4.5}" textLength="22">${60 - i * 20}K</text>`;
});
out += `<text class="ct ax" x="424" y="489" textLength="14.500">0K</text>
<path d="M440 484.500H1190" stroke="#b8b8b8" stroke-dasharray="3 1"/>
<path class="axis" fill="none" d="M445.500 199V661M1190.500 199V661M386 219.500H1190M386 501.500H1190"/>
<text x="717" y="185" textLength="142" font-family="Open Sans" font-size="19.500" font-weight="700" lengthAdjust="spacingAndGlyphs" fill="#333">EXPENSES YOY</text>
<text class="ct ax" x="774" y="214" textLength="86">Clothing stores</text>
<text class="ct" transform="translate(406 375) rotate(-90)" textLength="32">Value</text>`;
for (let i = 0; i < 20; i++) {
  const [a, b] = [data[i][0], data[i + 1][0]];
  out += `<linearGradient id="g${i}" gradientUnits="userSpaceOnUse" x1="${px(i)}" y1="${py(a)}" x2="${px(i + 1)}" y2="${py(b)}"><stop stop-color="${shade(a)}"/><stop offset="1" stop-color="${shade(b)}"/></linearGradient>
  <path d="M${px(i)} ${py(a)}L${px(i + 1)} ${py(b)}" stroke="url(#g${i})" stroke-width="9"/><path class="grid" d="M${Math.round(px(i) + step / 2) - .5} 502v3"/>`;
}
data.forEach(([v], i) => { out += `<circle cx="${px(i)}" cy="${py(v)}" r="5.800" fill="${shade(v)}"/>`; });
data.forEach(([v, x, y, w, names], i) => {
  const t = v.toLocaleString("en-US");
  out += `<text class="ct" x="${x - w / 2}" y="${y + 4.5}" ${fitted(t, w)}>${t}</text>`;
  names.forEach(([n, len], j) => {
    const bx = px(i) + (names.length === 1 ? 3.5 : j ? 11.5 : -4.5);
    out += `<text class="ct ax" transform="translate(${bx} ${506 + len}) rotate(-90)" textLength="${len}">${n}</text>`;
  });
});
document.getElementById("chart").innerHTML = out;

// Spread each label's letters over its nominal width.
document.querySelectorAll("[data-w]").forEach(el => {
  const gap = (el.dataset.w - el.getBoundingClientRect().width) / el.textContent.length;
  el.style.letterSpacing = gap.toFixed(3) + "px";
});
```
